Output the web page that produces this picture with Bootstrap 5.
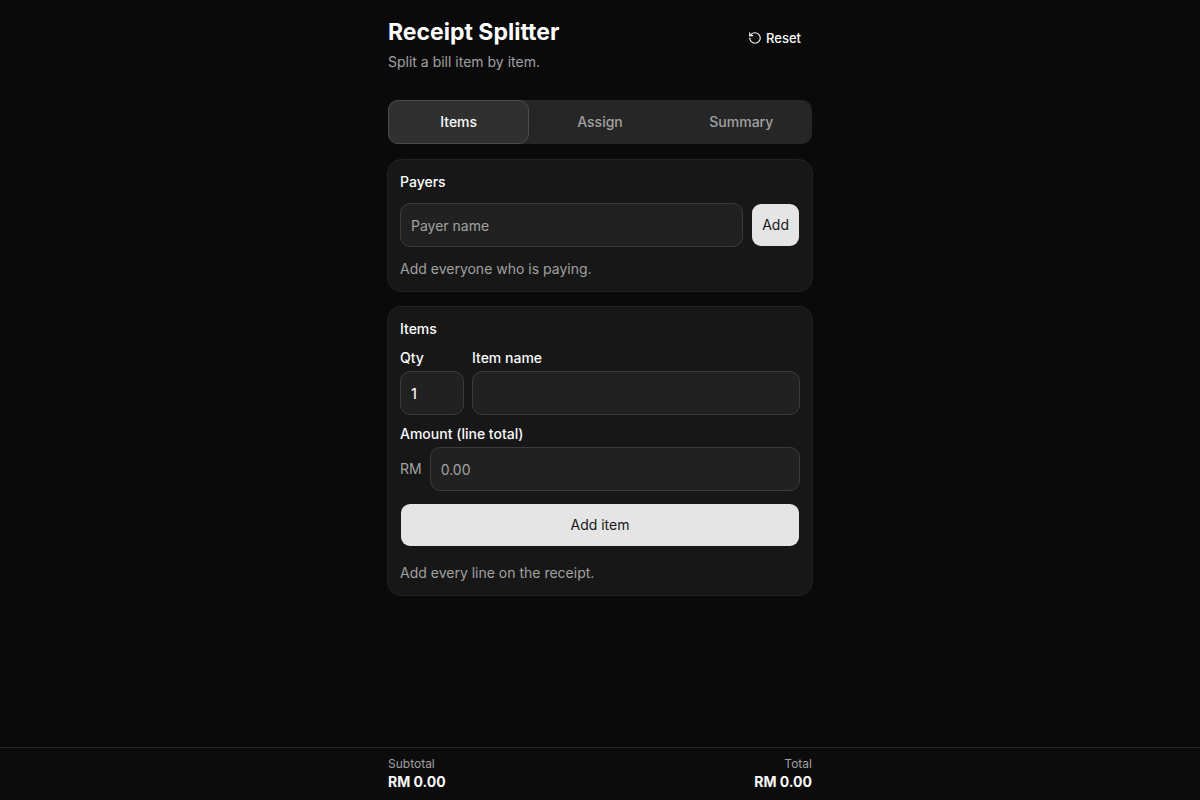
<!DOCTYPE html>
<html lang="en" data-bs-theme="dark">
<head>
<meta charset="utf-8">
<meta name="viewport" content="width=device-width, initial-scale=1">
<title>Receipt Splitter</title>
<link href="https://cdn.jsdelivr.net/npm/bootstrap@5.3.0/dist/css/bootstrap.min.css" rel="stylesheet">
<style>
  body { background: #0a0a0a; color: #fafafa; font-family: Inter, "Liberation Sans", sans-serif; font-size: 14px; line-height: 20px; }
  .shell { width: 100%; max-width: 448px; margin-inline: auto; padding-inline: 12px; }
  .muted { color: #a1a1a1; }
  .app-title { font-size: 23px; line-height: 32px; font-weight: 700; }
  .btn { --bs-btn-font-size: 14px; --bs-btn-line-height: 20px; --bs-btn-border-radius: 10px; --bs-btn-padding-x: 10px; min-height: 44px; background-clip: padding-box; }
  .btn-reset { --bs-btn-font-size: 13px; --bs-btn-color: #fafafa; --bs-btn-hover-color: #fff; --bs-btn-hover-bg: #262626; font-weight: 500; }
  .btn-main { --bs-btn-color: #171717; --bs-btn-bg: #e5e5e5; --bs-btn-hover-color: #171717; --bs-btn-hover-bg: #d4d4d4; --bs-btn-active-bg: #d4d4d4; --bs-btn-active-color: #171717; }
  .step-tabs { background: #262626; border-radius: 10px; margin-top: 28px; }
  .step-tabs .nav-link { height: 44px; padding: 0; border: 1px solid transparent; border-radius: 10px; color: #a1a1a1; font-weight: 500; }
  .step-tabs .nav-link.active { background: #303030; border-color: #4b4b4b; color: #fafafa; }
  .panel { background: #171717; border-radius: 14px; padding: 12px; box-shadow: 0 0 0 1px #232323; }
  .panel-title { font-size: 14px; line-height: 19px; font-weight: 500; margin-bottom: 12px; }
  .form-control { height: 44px; padding: 0 10px; font-size: 14px; background: #212121; border-color: #3b3b3b; border-radius: 10px; color: #fafafa; }
  .form-control:focus { background: #212121; border-color: #737373; box-shadow: 0 0 0 3px #73737355; }
  .form-control::placeholder { color: #a1a1a1; }
  .form-label { font-weight: 500; line-height: 15px; margin-bottom: 6px; }
  .fields { gap: 11px; margin-bottom: 12px; }
  .qty { width: 64px; }
  .qty .form-control { font-weight: 500; }
  .totals { background: #0c0c0c; border-top: 1px solid #262626; }
  .totals dt { font-size: 12px; line-height: 16px; font-weight: 400; }
  .totals dd { font-weight: 700; }
</style>
</head>
<body>
<main class="shell pt-3 pb-5">
  <header class="d-flex justify-content-between align-items-start">
    <div>
      <h1 class="app-title mb-1">Receipt Splitter</h1>
      <p class="muted mb-0">Split a bill item by item.</p>
    </div>
    <button type="button" class="btn btn-reset d-flex align-items-center gap-1">
      <svg width="14" height="14" viewBox="0 0 24 24" fill="none" stroke="currentColor" stroke-width="2" stroke-linecap="round" stroke-linejoin="round" aria-hidden="true"><path d="M3 12a9 9 0 1 0 9-9 9.75 9.75 0 0 0-6.74 2.74L3 8"/><path d="M3 3v5h5"/></svg>
      Reset
    </button>
  </header>

  <div class="nav nav-pills nav-justified step-tabs mb-3" role="tablist">
    <button type="button" class="nav-link active col" role="tab" aria-selected="true">Items</button>
    <button type="button" class="nav-link col" role="tab" aria-selected="false">Assign</button>
    <button type="button" class="nav-link col" role="tab" aria-selected="false">Summary</button>
  </div>

  <section class="panel mb-3">
    <h2 class="panel-title">Payers</h2>
    <form class="d-flex gap-2">
      <input type="text" class="form-control" placeholder="Payer name" aria-label="Payer name">
      <button type="button" class="btn btn-main">Add</button>
    </form>
    <p class="muted mt-2 pt-1 mb-0">Add everyone who is paying.</p>
  </section>

  <section class="panel">
    <h2 class="panel-title">Items</h2>
    <form>
      <div class="d-flex flex-column fields">
        <div class="d-flex gap-2">
          <div class="qty d-flex flex-column">
            <label class="form-label" for="qty">Qty</label>
            <input type="text" inputmode="numeric" class="form-control" id="qty" value="1">
          </div>
          <div class="flex-grow-1 d-flex flex-column">
            <label class="form-label" for="item">Item name</label>
            <input type="text" class="form-control" id="item">
          </div>
        </div>
        <div class="d-flex flex-column">
          <label class="form-label" for="amount">Amount (line total)</label>
          <div class="d-flex align-items-center gap-2">
            <span class="muted">RM</span>
            <input type="text" inputmode="decimal" class="form-control" id="amount" placeholder="0.00">
          </div>
        </div>
      </div>
      <button type="button" class="btn btn-main w-100 mb-3">Add item</button>
    </form>
    <p class="muted mb-0">Add every line on the receipt.</p>
  </section>
</main>

<footer class="totals fixed-bottom">
  <dl class="shell d-flex justify-content-between py-2 mb-0">
    <div><dt class="muted">Subtotal</dt><dd class="mb-0">RM 0.00</dd></div>
    <div class="text-end"><dt class="muted">Total</dt><dd class="mb-0">RM 0.00</dd></div>
  </dl>
</footer>
<script src="https://cdn.jsdelivr.net/npm/bootstrap@5.3.0/dist/js/bootstrap.bundle.min.js"></script>
</body>
</html>
